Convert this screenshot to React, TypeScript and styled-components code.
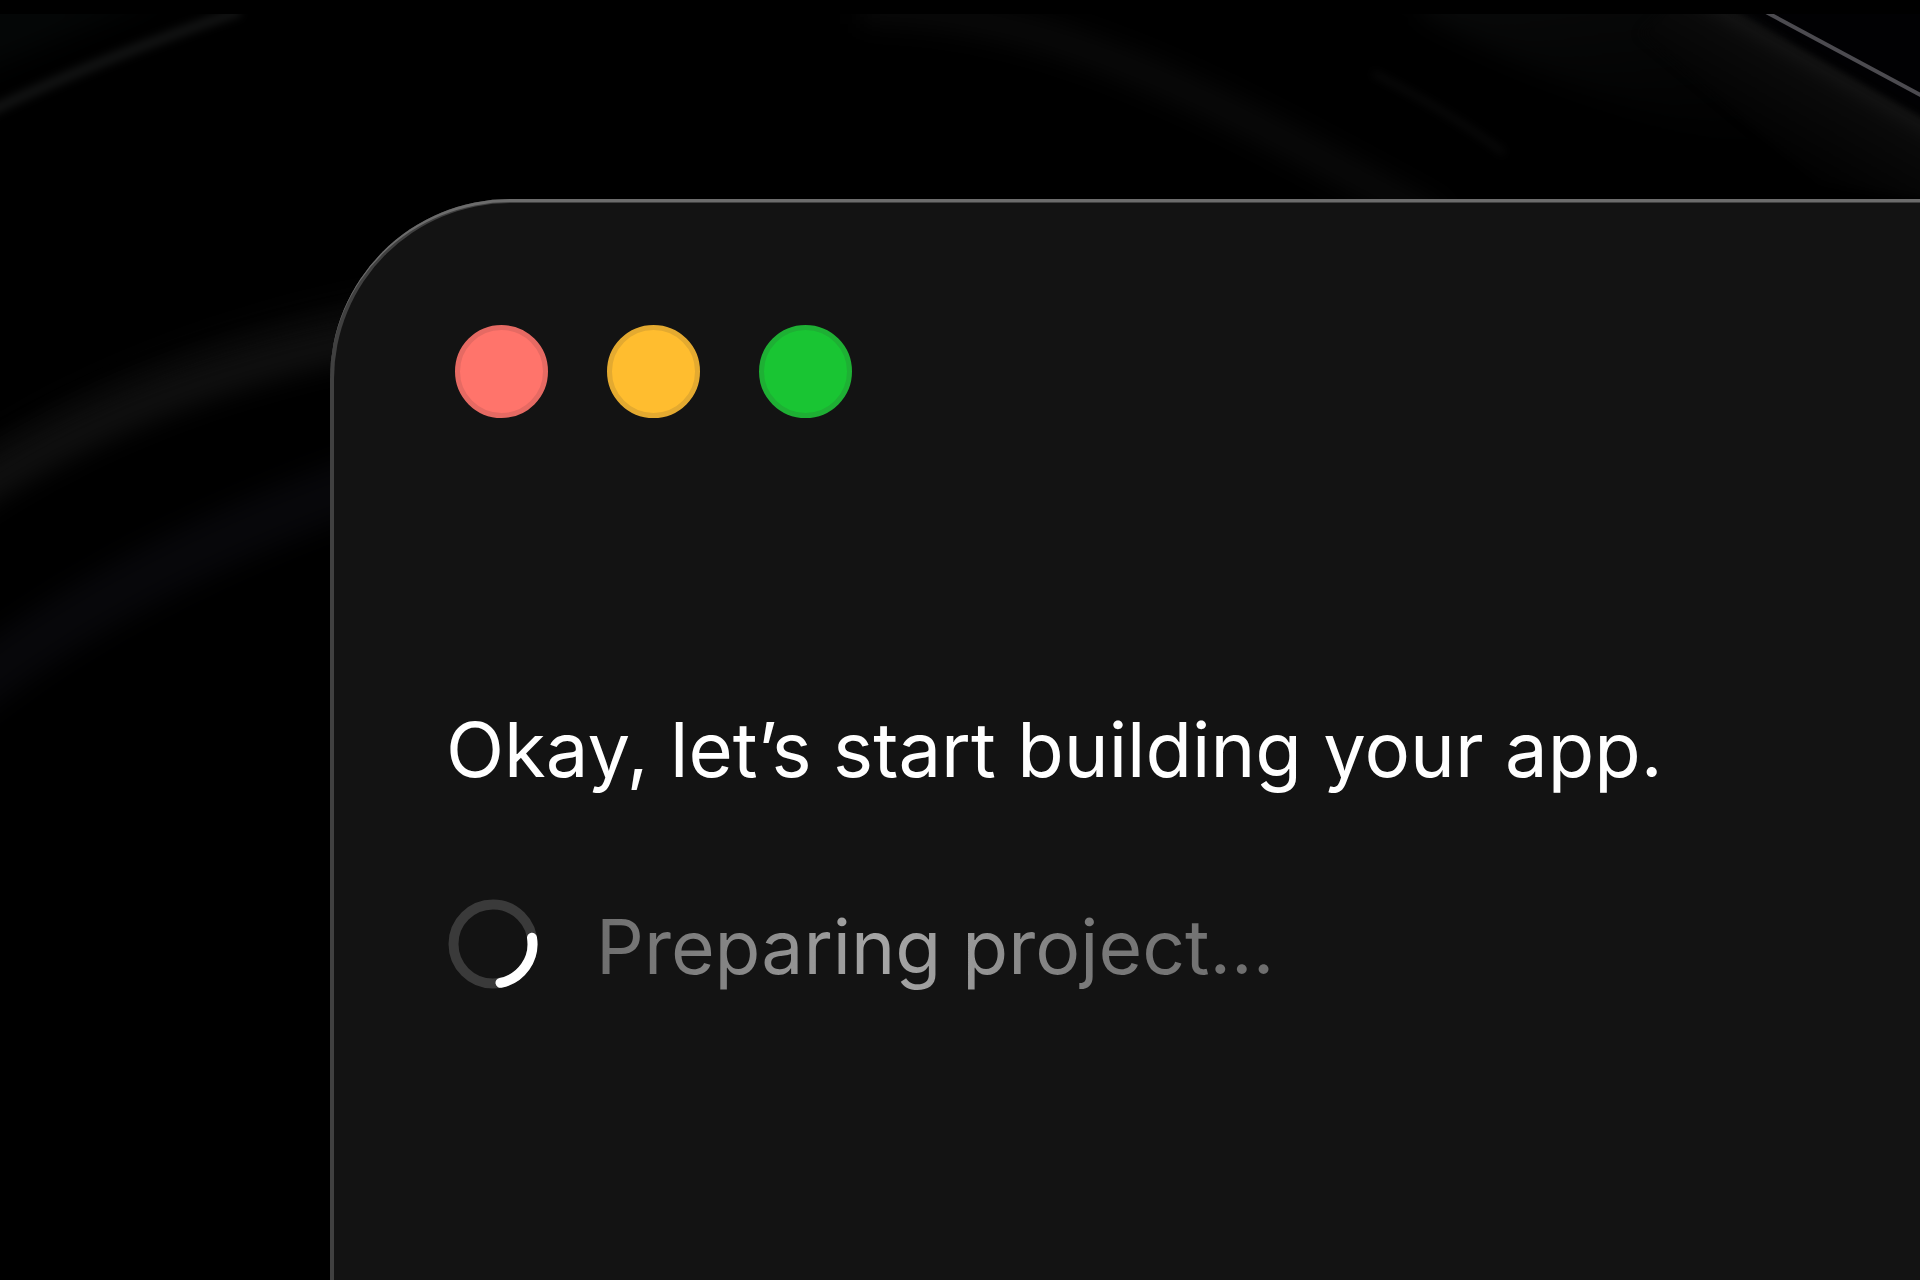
import React from "react";
import styled, { createGlobalStyle } from "styled-components";

const GlobalStyle = createGlobalStyle`
  *, *::before, *::after { box-sizing: border-box; }
  body { margin: 0; background: #000; }
`;

const Stage = styled.main`
  position: relative;
  display: flex;
  flex-direction: column;
  min-height: 100vh;
  padding: 199px 0 0 330px;
  overflow: hidden;
  background: #000;
  font-family: Inter, "Liberation Sans", sans-serif;
`;

const Backdrop = styled.svg`
  position: absolute;
  top: 14px;
  left: 0;
  width: 100%;
  height: calc(100% - 14px);
`;

const Window = styled.section`
  position: relative;
  flex: 1;
  display: flex;
  flex-direction: column;
  gap: 283px;
  padding: 122px 112px 48px;
  border: 4px solid #404040;
  border-right: 0;
  border-bottom: 0;
  border-top-left-radius: 180px;
  background: #131313;

  &::before {
    content: "";
    position: absolute;
    inset: -4px 0 0 -4px;
    border-top: 3px solid #6c6c6c;
    border-top-left-radius: 180px;
    pointer-events: none;
  }
`;

const Controls = styled.header`
  display: flex;
  gap: 59px;
  padding-left: 9px;
`;

const Light = styled.button<{ $fill: string; $edge: string }>`
  width: 93px;
  height: 93px;
  padding: 0;
  border: 5px solid ${(p) => p.$edge};
  border-radius: 50%;
  background: ${(p) => p.$fill};
`;

const Conversation = styled.div`
  display: flex;
  flex-direction: column;
  gap: 102px;
`;

const Message = styled.p`
  margin: 0;
  color: #fff;
  font-size: 76px;
  line-height: 96px;
`;

const Status = styled.div`
  display: flex;
  align-items: flex-start;
  gap: 58px;
  padding-left: 2px;
`;

const Spinner = styled.svg`
  flex: none;
  width: 90px;
  height: 90px;
`;

const StatusText = styled(Message)`
  color: transparent;
  font-size: 75px;
  background: linear-gradient(
    90deg,
    #6e6e6e 0%,
    #858585 20%,
    #a6a6a6 42%,
    #999 54%,
    #7a7a7a 72%,
    #6e6e6e 100%
  );
  background-clip: text;
  -webkit-background-clip: text;
`;

export default function App() {
  return (
    <>
      <GlobalStyle />
      <Stage>
        <Backdrop viewBox="0 0 1920 1266" preserveAspectRatio="xMinYMin slice" aria-hidden="true">
          <defs>
            <filter id="soft" filterUnits="userSpaceOnUse" x="-100" y="-100" width="2120" height="1000" colorInterpolationFilters="sRGB">
              <feGaussianBlur stdDeviation="13" />
            </filter>
            <filter id="fine" filterUnits="userSpaceOnUse" x="-100" y="-100" width="2120" height="1000" colorInterpolationFilters="sRGB">
              <feGaussianBlur stdDeviation="4" />
            </filter>
            <linearGradient id="sheen" gradientUnits="userSpaceOnUse" x1="1831" y1="50" x2="1771" y2="156">
              <stop offset="0" stopColor="#161616" />
              <stop offset="0.2" stopColor="#0a0a0a" />
              <stop offset="1" stopColor="#000000" />
            </linearGradient>
            <linearGradient id="haze" x1="0" y1="0" x2="0.3" y2="1">
              <stop offset="0" stopColor="#090a0a" />
              <stop offset="1" stopColor="#000000" />
            </linearGradient>
          </defs>
          <g filter="url(#soft)">
            <path d="M1420 -30H1760L1860 160Q1600 100 1420 0Z" fill="url(#haze)" />
            <path d="M-60 -20H170L-60 76Z" fill="#040606" />
          </g>
          <path d="M1690 -30L1960 124V190L1820 170L1640 20Z" fill="url(#sheen)" filter="url(#fine)" />
          <path d="M1720 -16L1930 104L1990 60V-40Z" fill="#010103" filter="url(#fine)" />
          <path d="M1766 -2L1924 83" stroke="#4c4b50" strokeWidth="4" />
          <g fill="none">
            <path d="M-20 102Q100 44 240 -3" stroke="#131414" strokeWidth="10" filter="url(#fine)" />
            <path d="M860 -6C1040 -4 1180 66 1440 208" stroke="#090909" strokeWidth="32" filter="url(#soft)" />
            <path d="M1373 59Q1450 98 1504 139" stroke="#0c0c0c" strokeWidth="5" filter="url(#fine)" />
            <path d="M-60 484Q130 346 400 296" stroke="#070707" strokeWidth="44" filter="url(#soft)" />
            <path d="M-60 502Q130 366 400 318" stroke="#101010" strokeWidth="36" filter="url(#soft)" />
            <path d="M-60 700Q110 554 400 456" stroke="#07070a" strokeWidth="56" filter="url(#soft)" />
          </g>
        </Backdrop>
        <Window aria-label="App builder">
          <Controls>
            <Light type="button" aria-label="Close" $fill="#ff746b" $edge="#e66a63" />
            <Light type="button" aria-label="Minimize" $fill="#ffbd2f" $edge="#e4aa30" />
            <Light type="button" aria-label="Zoom" $fill="#19c533" $edge="#1eb034" />
          </Controls>
          <Conversation>
            <Message>Okay, let’s start building your app.</Message>
            <Status role="status">
              <Spinner viewBox="0 0 90 90" fill="none" strokeWidth="10" aria-hidden="true">
                <circle cx="45" cy="45" r="39.5" stroke="#3a3a3a" />
                <path d="M84 38.8A39.5 39.5 0 0 1 52.5 83.8" stroke="#fff" strokeLinecap="round" />
              </Spinner>
              <StatusText>Preparing project...</StatusText>
            </Status>
          </Conversation>
        </Window>
      </Stage>
    </>
  );
}
